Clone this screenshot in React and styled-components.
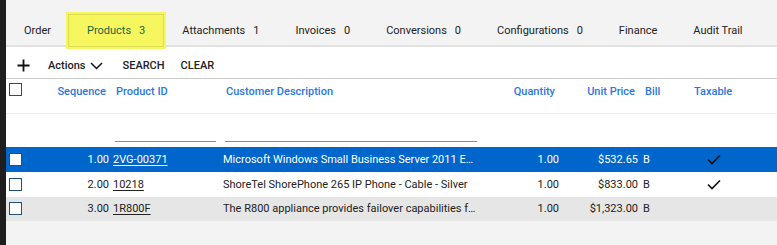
import React from "react";
import styled, { createGlobalStyle } from "styled-components";

const Global = createGlobalStyle`
  html, body { margin: 0; padding: 0; background: #f3f3f3; }
  body { font-family: Roboto, "Liberation Sans", Arial, sans-serif; }
  #root { height: 245px; }
  * { box-sizing: border-box; }
`;

const Page = styled.div`
  display: flex;
  height: 245px;
  overflow: hidden;
`;

const Strip = styled.div`
  width: 6px;
  flex: none;
  background: #1e1e1e;
`;

const Main = styled.div`
  flex: 1;
  display: flex;
  flex-direction: column;
  min-width: 0;
  background: #f3f3f3;
`;

const TabBar = styled.div`
  display: flex;
  align-items: flex-end;
  height: 47px;
  background: #f3f3f3;
  border-bottom: 2px solid #e2e2e2;
`;

const Tab = styled.div`
  height: ${(p) => (p.$active ? "37px" : "30px")};
  margin-bottom: ${(p) => (p.$active ? "-4px" : "0")};
  padding: ${(p) => (p.$active ? "0 21px 1px 21px" : "0 18px")};
  margin-left: ${(p) => (p.$active ? "-3px" : "0")};
  margin-right: ${(p) => (p.$active ? "-2px" : "0")};
  display: flex;
  align-items: center;
  font-size: 11px;
  color: ${(p) => (p.$active ? "#17693f" : "#222")};
  background: ${(p) => (p.$active ? "#f6f65e" : "transparent")};
  box-shadow: ${(p) => (p.$active ? "inset 0 0 0 2px #f6f65e, inset 0 0 0 3px #dcdc55" : "none")};
  border-radius: ${(p) => (p.$active ? "2px" : "0")};
  position: relative;
  z-index: 1;
  white-space: nowrap;
`;

const Count = styled.span`
  margin-left: 8px;
`;

const Content = styled.div`
  background: #fff;
  display: flex;
  flex-direction: column;
`;

const Toolbar = styled.div`
  display: flex;
  align-items: center;
  height: 32px;
  padding: 6px 0 0 11px;
  border-bottom: 1px solid #cacaca;
`;

const IconBtn = styled.button`
  border: 0;
  background: none;
  padding: 0;
  display: flex;
  align-items: center;
  cursor: pointer;
  font-family: inherit;
  font-size: 11px;
  font-weight: 500;
  color: #222;
  margin-right: ${(p) => p.$mr || 0}px;
  gap: 4px;
`;

const Grid = styled.div`
  display: grid;
  grid-template-columns: 24px 81px 110px 259px 80px 80px 50px 1fr;
  align-items: center;
  height: ${(p) => p.$h}px;
  background: ${(p) => p.$bg || "#fff"};
  color: ${(p) => p.$fg || "#222"};
  border-bottom: ${(p) => p.$border || "none"};
  font-size: 11px;
`;

const HeadGrid = styled(Grid)`
  align-items: start;
  padding-top: 4px;
`;

const Cell = styled.div`
  text-align: ${(p) => p.$align || "left"};
  padding-left: ${(p) => p.$pl || 0}px;
  padding-right: ${(p) => p.$pr || 0}px;
  white-space: nowrap;
  overflow: hidden;
  text-overflow: ellipsis;
  display: ${(p) => (p.$flex ? "flex" : "block")};
  justify-content: ${(p) => p.$justify || "flex-start"};
`;

const HeadCell = styled(Cell)`
  color: #2a78dd;
  font-weight: 500;
  padding-top: 2px;
`;

const Box = styled.span`
  display: block;
  width: 13px;
  height: 13px;
  margin-left: 3px;
  border: 1.5px solid #1f4f7a;
  background: #fff;
`;

const Link = styled.span`
  text-decoration: underline;
  text-underline-offset: 2px;
`;

const FilterLine = styled.div`
  border-bottom: 1px solid #8a8a8a;
  margin-top: 22px;
  margin-left: ${(p) => p.$ml}px;
  width: ${(p) => p.$w}px;
`;

const Check = () => (
  <svg width="14" height="11" viewBox="0 0 14 11">
    <polyline points="1,5.5 5,9.5 13,1.5" fill="none" stroke="#111" strokeWidth="1.6" />
  </svg>
);

const Plus = () => (
  <svg width="13" height="13" viewBox="0 0 13 13">
    <path d="M6.5 0.5v12M0.5 6.5h12" stroke="#111" strokeWidth="1.8" />
  </svg>
);

const Chevron = () => (
  <svg width="13" height="8" viewBox="0 0 13 8">
    <polyline points="1,1 6.5,6.5 12,1" fill="none" stroke="#111" strokeWidth="1.5" />
  </svg>
);

const tabs = [
  { label: "Order" },
  { label: "Products", count: 3, active: true },
  { label: "Attachments", count: 1 },
  { label: "Invoices", count: 0 },
  { label: "Conversions", count: 0 },
  { label: "Configurations", count: 0 },
  { label: "Finance" },
  { label: "Audit Trail" },
];

const rows = [
  { seq: "1.00", id: "2VG-00371", desc: "Microsoft Windows Small Business Server 2011 Essentials", qty: "1.00", price: "$532.65", bill: "B", tax: true, bg: "#0066cc", fg: "#fff" },
  { seq: "2.00", id: "10218", desc: "ShoreTel ShorePhone 265 IP Phone - Cable - Silver", qty: "1.00", price: "$833.00", bill: "B", tax: true, bg: "#fff", fg: "#222" },
  { seq: "3.00", id: "1R800F", desc: "The R800 appliance provides failover capabilities for the R800", qty: "1.00", price: "$1,323.00", bill: "B", tax: false, bg: "#e6e6e6", fg: "#222" },
];

export default function App() {
  return (
    <>
      <Global />
      <Page>
        <Strip />
        <Main>
          <TabBar>
            {tabs.map((t) => (
              <Tab key={t.label} $active={t.active}>
                {t.label}
                {t.count !== undefined && <Count>{t.count}</Count>}
              </Tab>
            ))}
          </TabBar>
          <Content>
            <Toolbar>
              <IconBtn $mr={18}><Plus /></IconBtn>
              <IconBtn $mr={20}>Actions <Chevron /></IconBtn>
              <IconBtn $mr={16}>SEARCH</IconBtn>
              <IconBtn>CLEAR</IconBtn>
            </Toolbar>
            <HeadGrid $h={35} $border="1px solid #efefef">
              <Cell><Box /></Cell>
              <HeadCell $align="right" $pr={5}>Sequence</HeadCell>
              <HeadCell $pl={5}>Product ID</HeadCell>
              <HeadCell $pl={5}>Customer Description</HeadCell>
              <HeadCell $align="right" $pr={5}>Quantity</HeadCell>
              <HeadCell $align="right" $pr={5}>Unit Price</HeadCell>
              <HeadCell $pl={5}>Bill</HeadCell>
              <HeadCell $pl={4}>Taxable</HeadCell>
            </HeadGrid>
            <Grid $h={33}>
              <Cell />
              <Cell />
              <Cell><FilterLine $ml={4} $w={101} /></Cell>
              <Cell><FilterLine $ml={4} $w={252} /></Cell>
            </Grid>
          </Content>
          {rows.map((r) => (
            <Grid key={r.id} $h={r.id === "10218" ? 25 : 24.5} $bg={r.bg} $fg={r.fg}>
              <Cell><Box /></Cell>
              <Cell $align="right" $pr={2}>{r.seq}</Cell>
              <Cell $pl={2}><Link>{r.id}</Link></Cell>
              <Cell $pl={2} $pr={4}>{r.desc}</Cell>
              <Cell $align="right" $pr={1}>{r.qty}</Cell>
              <Cell $align="right" $pr={2}>{r.price}</Cell>
              <Cell $pl={3}>{r.bill}</Cell>
              <Cell $pl={17} $flex>{r.tax && <Check />}</Cell>
            </Grid>
          ))}
        </Main>
      </Page>
    </>
  );
}
